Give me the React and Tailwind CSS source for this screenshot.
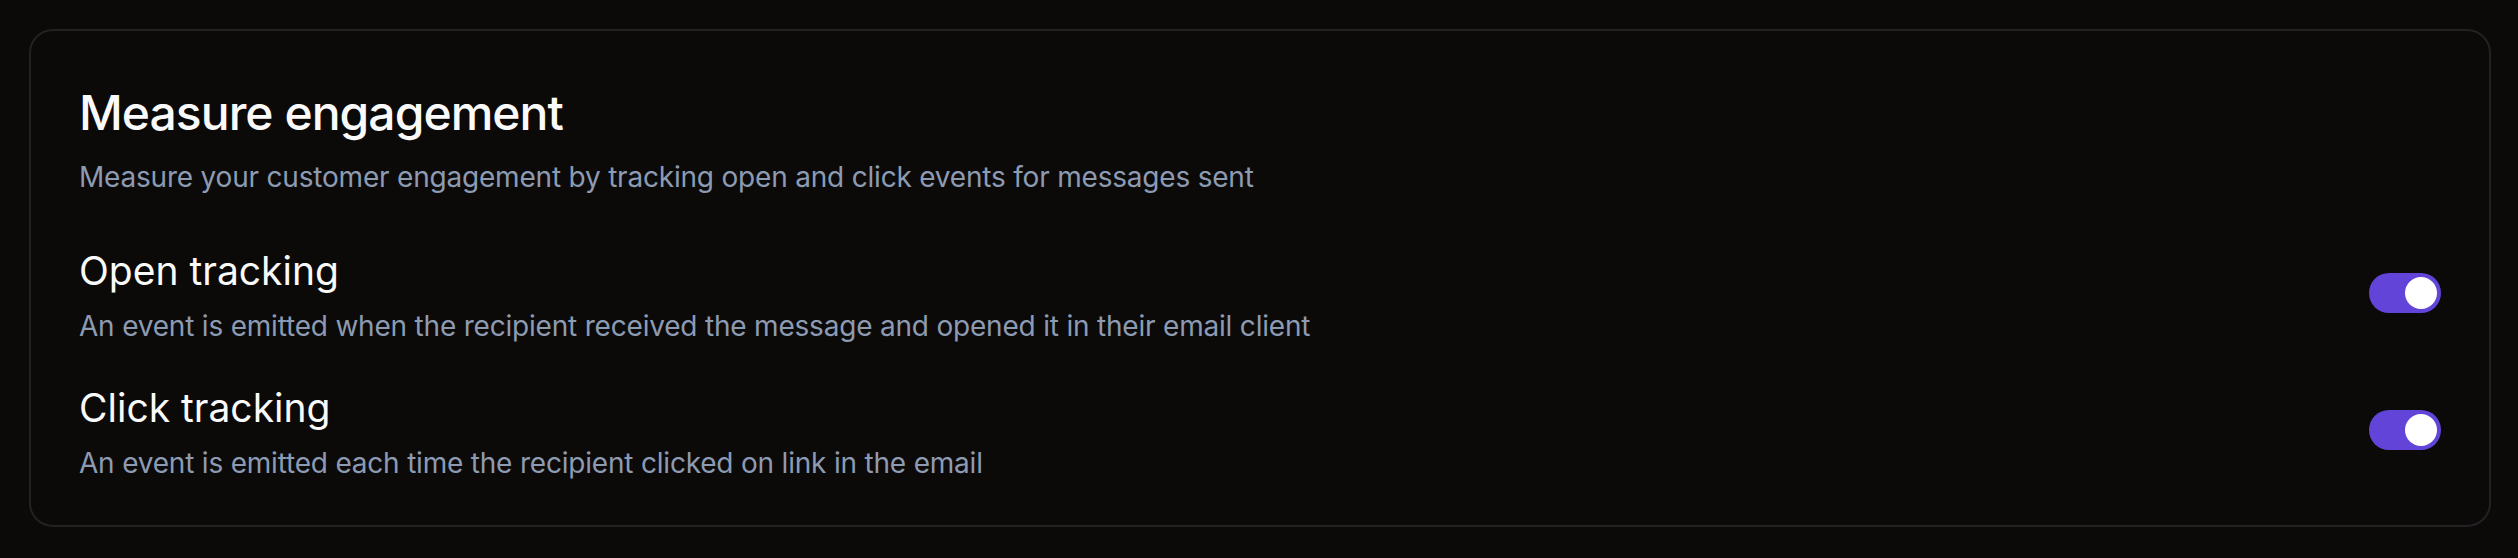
import { useState } from 'react';

const rows = [
    {
        id: 'open',
        title: 'Open tracking',
        desc: 'An event is emitted when the recipient received the message and opened it in their email client',
    },
    {
        id: 'click',
        title: 'Click tracking',
        desc: 'An event is emitted each time the recipient clicked on link in the email',
    },
];

function Toggle({ on, onChange }) {
    return (
        <button
            onClick={() => onChange(!on)}
            className={`mt-[25px] flex h-[40px] w-[72px] shrink-0 items-center rounded-full p-[4px] ${on ? 'justify-end bg-[#6244d9]' : 'justify-start bg-[#3a3a3d]'}`}
        >
            <span className="block h-[32px] w-[32px] rounded-full bg-white" />
        </button>
    );
}

export default function App() {
    const [enabled, setEnabled] = useState({ open: true, click: true });

    return (
        <div className="min-h-screen bg-[#0b0a09] pl-[29px] pr-[27px] pt-[29px] pb-[29px] font-['Inter',sans-serif]">
            <div className="rounded-[24px] border-2 border-[#222224] px-12 pt-[50px] pb-[42px]">
                <h2 className="text-[48px] leading-[64px] font-medium tracking-[-0.02em] text-[#fafafa]">
                    Measure engagement
                </h2>
                <p className="mt-[12px] text-[28px] leading-[40px] tracking-[-0.2px] text-[#8d9bb2]">
                    Measure your customer engagement by tracking open and click events for messages sent
                </p>

                <div className="mt-[51px] flex flex-col gap-[39px]">
                    {rows.map(r => (
                        <div key={r.id} className="flex items-start justify-between">
                            <div>
                                <h3 className="text-[39px] leading-[46px] text-[#fafafa]">{r.title}</h3>
                                <p className="mt-[12px] text-[28px] leading-[40px] tracking-[-0.2px] text-[#8d9bb2]">{r.desc}</p>
                            </div>
                            <Toggle
                                on={enabled[r.id]}
                                onChange={v => setEnabled(e => ({ ...e, [r.id]: v }))}
                            />
                        </div>
                    ))}
                </div>
            </div>
        </div>
    );
}
